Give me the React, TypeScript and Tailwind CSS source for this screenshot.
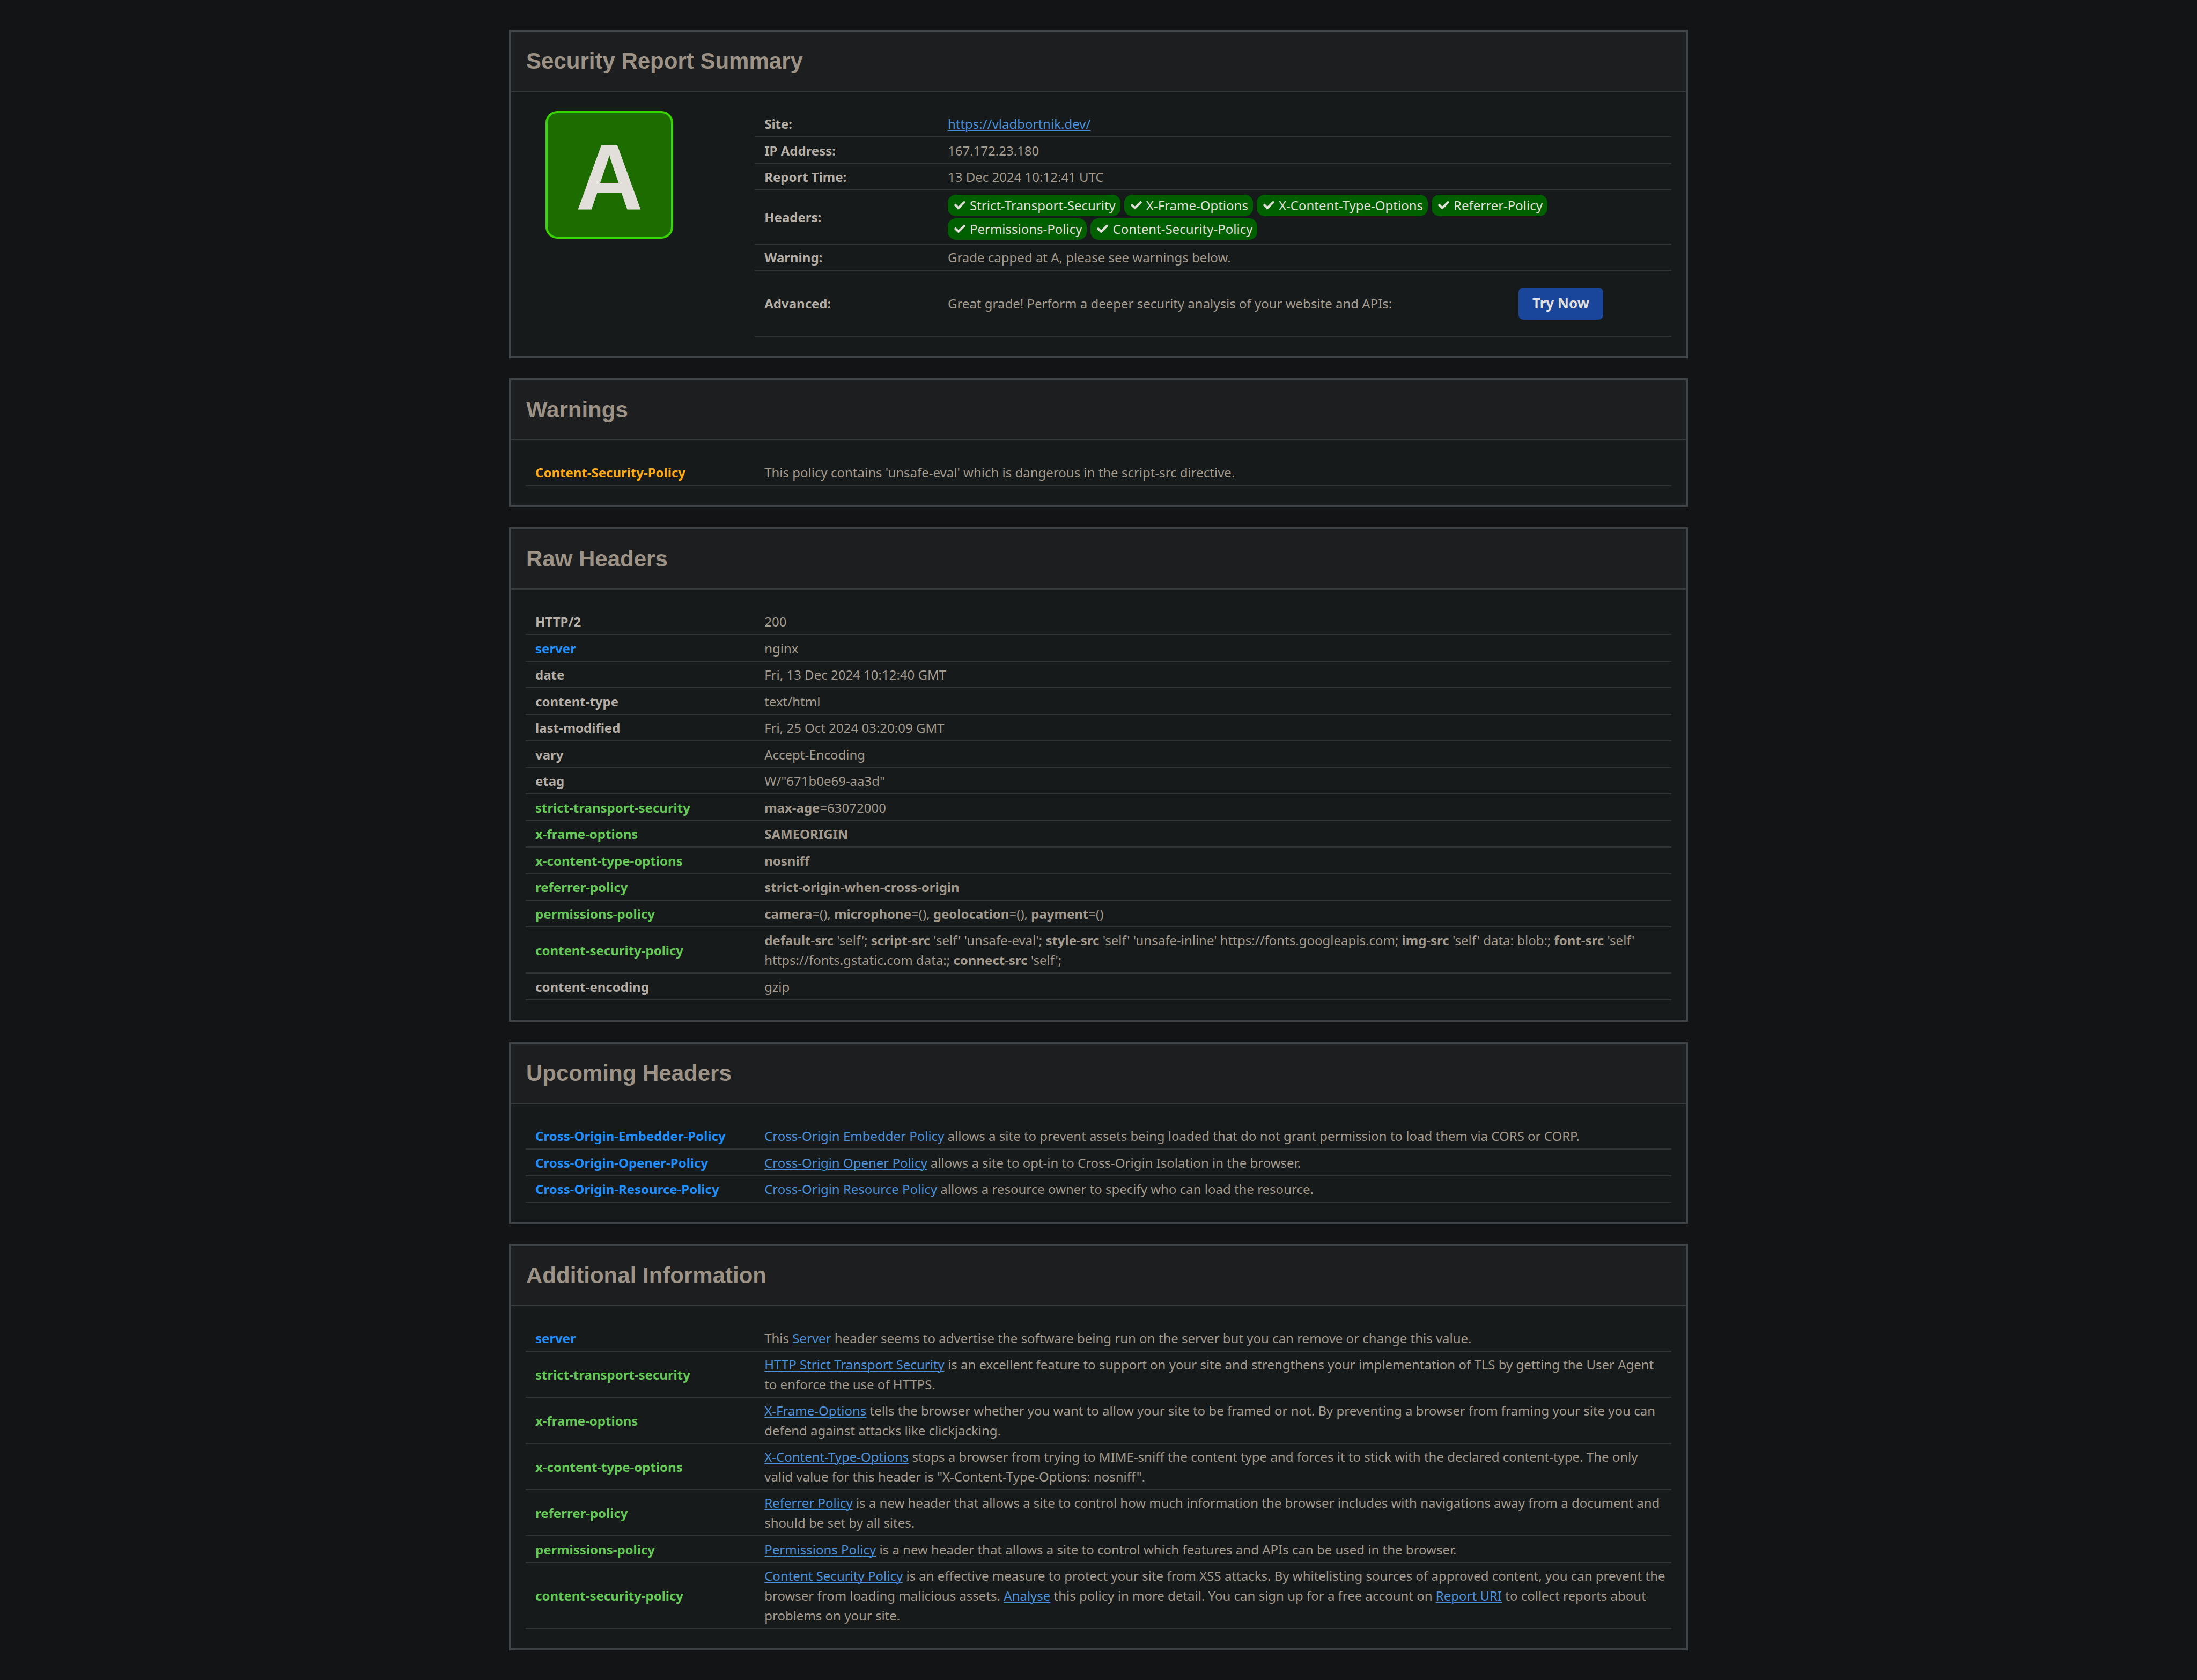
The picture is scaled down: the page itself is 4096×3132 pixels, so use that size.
import type { ReactNode } from "react";
import { FaCheck } from "react-icons/fa";

type Tone = "plain" | "info" | "good" | "warn";

const toneClass: Record<Tone, string> = {
  plain: "text-[#b5aea6]",
  info: "text-[#1f8fff]",
  good: "text-[#65c957]",
  warn: "text-[#ffaa14]",
};

function Panel({ title, children }: { title: string; children: ReactNode }) {
  return (
    <section className="border-4 border-[#3e4448] bg-[#161a1a]">
      <header className="flex h-28 items-center border-b-2 border-[#353b3d] bg-[#1d1e20] px-7">
        <h2 className="font-['Liberation_Sans',Arial,sans-serif] text-[42px] leading-[48px] font-bold text-[#9c9285]">
          {title}
        </h2>
      </header>
      <div className="px-[27px] py-9">{children}</div>
    </section>
  );
}

function Row({ label, tone = "plain", children }: { label: string; tone?: Tone; children: ReactNode }) {
  return (
    <tr className="h-[49px] even:h-[50px]">
      <th
        scope="row"
        className={`w-1/5 border-b-2 border-[#2f3537] py-[5px] pr-2 pl-[18px] text-left align-middle font-bold ${toneClass[tone]}`}
      >
        {label}
      </th>
      <td className="border-b-2 border-[#2f3537] py-[5px] pr-2 pl-[18px] align-middle">{children}</td>
    </tr>
  );
}

function DataTable({ children }: { children: ReactNode }) {
  return (
    <table className="w-full table-fixed border-separate border-spacing-0">
      <tbody>{children}</tbody>
    </table>
  );
}

function Link({ children, href = "#" }: { children: ReactNode; href?: string }) {
  return (
    <a href={href} className="text-[#4a90dc] underline decoration-1 underline-offset-[3px]">
      {children}
    </a>
  );
}

function Pill({ children }: { children: ReactNode }) {
  return (
    <li className="flex h-10 items-center gap-2 rounded-[15px] bg-[#006000] pr-[9px] pl-3 text-[#e2dfdb]">
      <FaCheck className="size-[21px]" aria-hidden="true" />
      {children}
    </li>
  );
}

const pills = [
  "Strict-Transport-Security",
  "X-Frame-Options",
  "X-Content-Type-Options",
  "Referrer-Policy",
  "Permissions-Policy",
  "Content-Security-Policy",
];

export default function App() {
  return (
    <main className="min-h-screen bg-[#131416] py-[55px] font-['Noto_Sans',sans-serif] text-[24px] leading-[37px] text-[#a2998d]">
      <div className="mx-auto flex max-w-[2198px] flex-col gap-[37px]">
        <Panel title="Security Report Summary">
          <div className="flex">
            <div className="w-1/5 pl-[37px]">
              <div className="flex size-[238px] items-center justify-center rounded-[22px] border-4 border-[#3bd400] bg-[#1c6c00] pt-2.5 font-['Liberation_Sans',Arial,sans-serif] text-[174px] leading-none font-bold text-[#e2dfdb]">
                A
              </div>
            </div>
            <div className="w-4/5">
              <DataTable>
                <Row label="Site:">
                  <Link href="https://vladbortnik.dev/">https://vladbortnik.dev/</Link>
                </Row>
                <Row label="IP Address:">167.172.23.180</Row>
                <Row label="Report Time:">13 Dec 2024 10:12:41 UTC</Row>
                <Row label="Headers:">
                  <ul className="flex min-h-[89px] max-w-[1200px] flex-wrap content-center gap-x-[7px] gap-y-1">
                    {pills.map((p) => (
                      <Pill key={p}>{p}</Pill>
                    ))}
                  </ul>
                </Row>
                <Row label="Warning:">Grade capped at A, please see warnings below.</Row>
                <Row label="Advanced:">
                  <div className="flex min-h-[111px] items-center">
                    <p className="w-[1064px]">
                      Great grade! Perform a deeper security analysis of your website and APIs:
                    </p>
                    <button
                      type="button"
                      className="h-[60px] rounded-[9px] bg-[#19469a] px-[26px] text-[26px] font-bold text-[#e2dfdb]"
                    >
                      Try Now
                    </button>
                  </div>
                </Row>
              </DataTable>
            </div>
          </div>
        </Panel>

        <Panel title="Warnings">
          <DataTable>
            <Row label="Content-Security-Policy" tone="warn">
              This policy contains 'unsafe-eval' which is dangerous in the script-src directive.
            </Row>
          </DataTable>
        </Panel>

        <Panel title="Raw Headers">
          <DataTable>
            <Row label="HTTP/2">200</Row>
            <Row label="server" tone="info">nginx</Row>
            <Row label="date">Fri, 13 Dec 2024 10:12:40 GMT</Row>
            <Row label="content-type">text/html</Row>
            <Row label="last-modified">Fri, 25 Oct 2024 03:20:09 GMT</Row>
            <Row label="vary">Accept-Encoding</Row>
            <Row label="etag">W/"671b0e69-aa3d"</Row>
            <Row label="strict-transport-security" tone="good">
              <b>max-age</b>=63072000
            </Row>
            <Row label="x-frame-options" tone="good">
              <b>SAMEORIGIN</b>
            </Row>
            <Row label="x-content-type-options" tone="good">
              <b>nosniff</b>
            </Row>
            <Row label="referrer-policy" tone="good">
              <b>strict-origin-when-cross-origin</b>
            </Row>
            <Row label="permissions-policy" tone="good">
              <b>camera</b>=(), <b>microphone</b>=(), <b>geolocation</b>=(), <b>payment</b>=()
            </Row>
            <Row label="content-security-policy" tone="good">
              <b>default-src</b> 'self'; <b>script-src</b> 'self' 'unsafe-eval'; <b>style-src</b> 'self' 'unsafe-inline'
              https://fonts.googleapis.com; <b>img-src</b> 'self' data: blob:; <b>font-src</b> 'self'
              https://fonts.gstatic.com data:; <b>connect-src</b> 'self';
            </Row>
            <Row label="content-encoding">gzip</Row>
          </DataTable>
        </Panel>

        <Panel title="Upcoming Headers">
          <DataTable>
            <Row label="Cross-Origin-Embedder-Policy" tone="info">
              <Link>Cross-Origin Embedder Policy</Link> allows a site to prevent assets being loaded that do not grant
              permission to load them via CORS or CORP.
            </Row>
            <Row label="Cross-Origin-Opener-Policy" tone="info">
              <Link>Cross-Origin Opener Policy</Link> allows a site to opt-in to Cross-Origin Isolation in the browser.
            </Row>
            <Row label="Cross-Origin-Resource-Policy" tone="info">
              <Link>Cross-Origin Resource Policy</Link> allows a resource owner to specify who can load the resource.
            </Row>
          </DataTable>
        </Panel>

        <Panel title="Additional Information">
          <DataTable>
            <Row label="server" tone="info">
              This <Link>Server</Link> header seems to advertise the software being run on the server but you can remove
              or change this value.
            </Row>
            <Row label="strict-transport-security" tone="good">
              <Link>HTTP Strict Transport Security</Link> is an excellent feature to support on your site and
              strengthens your implementation of TLS by getting the User Agent to enforce the use of HTTPS.
            </Row>
            <Row label="x-frame-options" tone="good">
              <Link>X-Frame-Options</Link> tells the browser whether you want to allow your site to be framed or not. By
              preventing a browser from framing your site you can defend against attacks like clickjacking.
            </Row>
            <Row label="x-content-type-options" tone="good">
              <Link>X-Content-Type-Options</Link> stops a browser from trying to MIME-sniff the content type and forces
              it to stick with the declared content-type. The only valid value for this header is
              "X-Content-Type-Options: nosniff".
            </Row>
            <Row label="referrer-policy" tone="good">
              <Link>Referrer Policy</Link> is a new header that allows a site to control how much information the
              browser includes with navigations away from a document and should be set by all sites.
            </Row>
            <Row label="permissions-policy" tone="good">
              <Link>Permissions Policy</Link> is a new header that allows a site to control which features and APIs can
              be used in the browser.
            </Row>
            <Row label="content-security-policy" tone="good">
              <Link>Content Security Policy</Link> is an effective measure to protect your site from XSS attacks. By
              whitelisting sources of approved content, you can prevent the browser from loading malicious assets.{" "}
              <Link>Analyse</Link> this policy in more detail. You can sign up for a free account on{" "}
              <Link>Report URI</Link> to collect reports about problems on your site.
            </Row>
          </DataTable>
        </Panel>
      </div>
    </main>
  );
}
